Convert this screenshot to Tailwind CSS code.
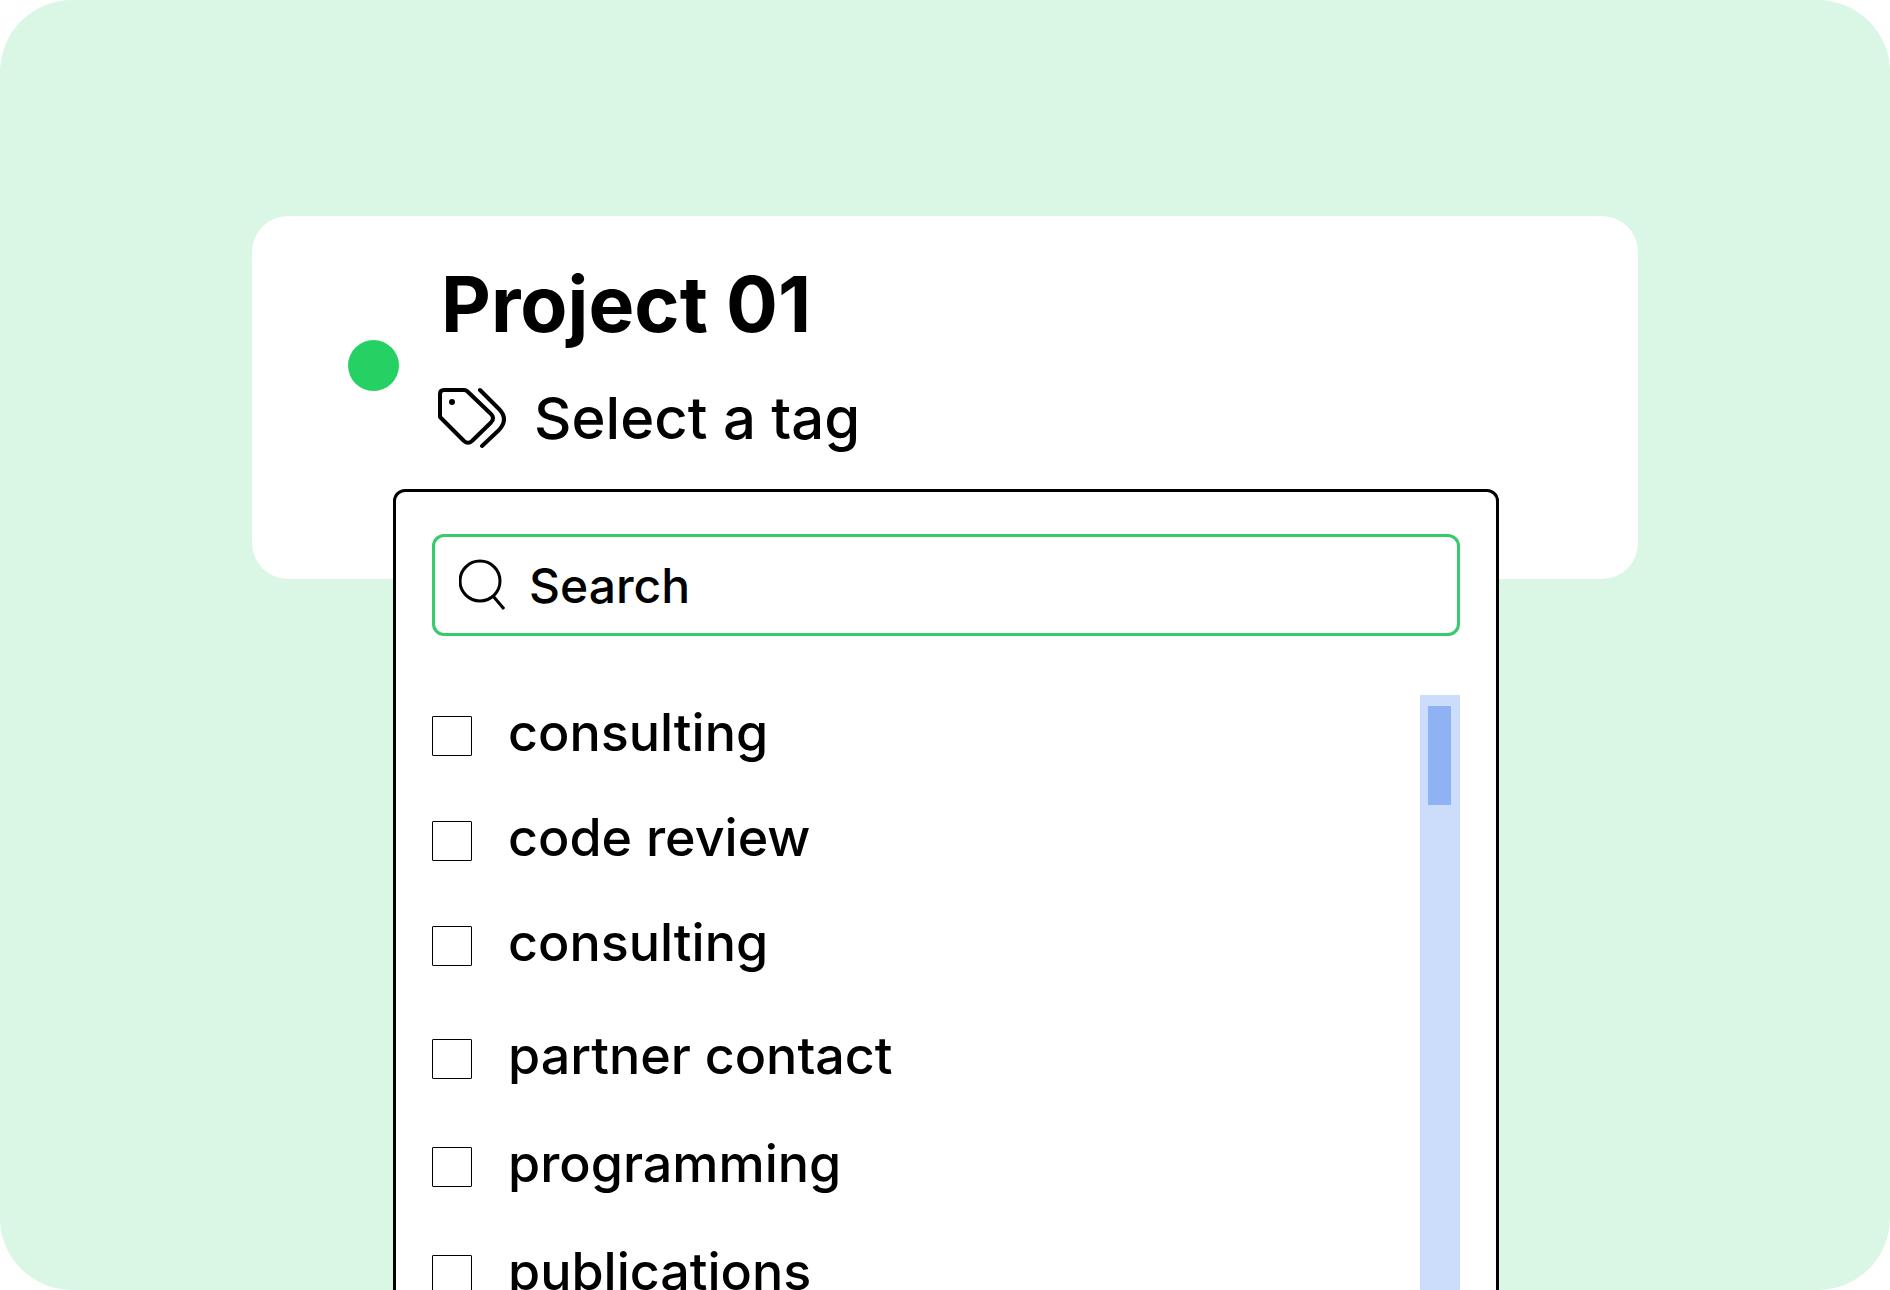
<!DOCTYPE html>
<html lang="en">
<head>
  <meta charset="UTF-8">
  <meta name="viewport" content="width=device-width, initial-scale=1.0">
  <title>Project 01 - Select a tag</title>
  <script src="https://cdn.jsdelivr.net/npm/@tailwindcss/browser@4"></script>
</head>
<body class="bg-white font-['Inter',sans-serif] text-black">
  <main class="h-screen overflow-hidden rounded-[72px] bg-[#daf6e4] pt-[216px]">

    <!-- Project card -->
    <section class="relative mx-auto flex h-[363px] w-11/15 rounded-[36px] bg-white pl-24 pt-12">
      <span class="mt-[76px] size-[51px] shrink-0 rounded-full bg-[#25d162]"></span>
      <div class="ml-9">
        <h1 class="pl-1.5 text-[77px] leading-[80px] font-bold">Project 01</h1>
        <button type="button" class="mt-[38px] flex items-center gap-[27px] text-[58px] leading-[72px] font-medium">
          <svg class="h-[62px] w-[72px]" viewBox="0 0 72 62" fill="none" stroke="currentColor" stroke-width="4" stroke-linecap="round" stroke-linejoin="round" aria-hidden="true">
            <path d="M9 3H29Q31 3 32.500 4.500L56 27Q60 31 56 35.500L37 54Q33 57.500 29 54L5 30V7Q5 3 9 3Z"/>
            <path d="M45 3L64 22Q74 32 64 43L47 59"/>
            <circle cx="17" cy="15" r="3" fill="currentColor" stroke="none"/>
          </svg>
          Select a tag
        </button>
      </div>

      <!-- Tag menu -->
      <div class="absolute left-[141px] right-[139px] top-[273px] rounded-xl border-3 border-black bg-white px-9 pt-[42px]">
        <div class="flex h-[102px] items-center gap-6 rounded-xl border-3 border-[#35ca6a] px-6">
          <svg class="h-[52px] w-[46px] shrink-0" viewBox="0 0 46 52" fill="none" stroke="currentColor" stroke-width="3" aria-hidden="true">
            <circle cx="21" cy="22" r="20"/>
            <path d="M34 37L45 50"/>
          </svg>
          <input type="search" placeholder="Search" aria-label="Search tags" class="w-full bg-transparent text-5xl font-medium outline-none placeholder:text-black">
        </div>

        <div class="mt-[59px] flex justify-between">
          <div class="text-[52px] leading-[60px] font-medium">
            <div class="grid auto-rows-[105px]">
              <label class="flex items-center gap-9 pb-[23px]">
                <input type="checkbox" class="size-10 appearance-none rounded-[1px] border border-black bg-white checked:bg-[#25d162]">
                <span class="pb-1.5">consulting</span>
              </label>
              <label class="flex items-center gap-9 pb-[23px]">
                <input type="checkbox" class="size-10 appearance-none rounded-[1px] border border-black bg-white checked:bg-[#25d162]">
                <span class="pb-1.5">code review</span>
              </label>
              <label class="flex items-center gap-9 pb-[23px]">
                <input type="checkbox" class="size-10 appearance-none rounded-[1px] border border-black bg-white checked:bg-[#25d162]">
                <span class="pb-1.5">consulting</span>
              </label>
            </div>
            <div class="mt-1.5 grid auto-rows-[108px]">
              <label class="flex items-center gap-9 pb-[23px]">
                <input type="checkbox" class="size-10 appearance-none rounded-[1px] border border-black bg-white checked:bg-[#25d162]">
                <span class="pb-1.5">partner contact</span>
              </label>
              <label class="flex items-center gap-9 pb-[23px]">
                <input type="checkbox" class="size-10 appearance-none rounded-[1px] border border-black bg-white checked:bg-[#25d162]">
                <span class="pb-1.5">programming</span>
              </label>
              <label class="flex items-center gap-9 pb-[23px]">
                <input type="checkbox" class="size-10 appearance-none rounded-[1px] border border-black bg-white checked:bg-[#25d162]">
                <span class="pb-1.5">publications</span>
              </label>
            </div>
          </div>

          <!-- Scrollbar -->
          <div class="w-10 bg-[#ccdcfb] pl-2 pt-[11px]">
            <div class="h-[99px] w-[23px] bg-[#8fb2f4]"></div>
          </div>
        </div>
      </div>
    </section>

  </main>
</body>
</html>
